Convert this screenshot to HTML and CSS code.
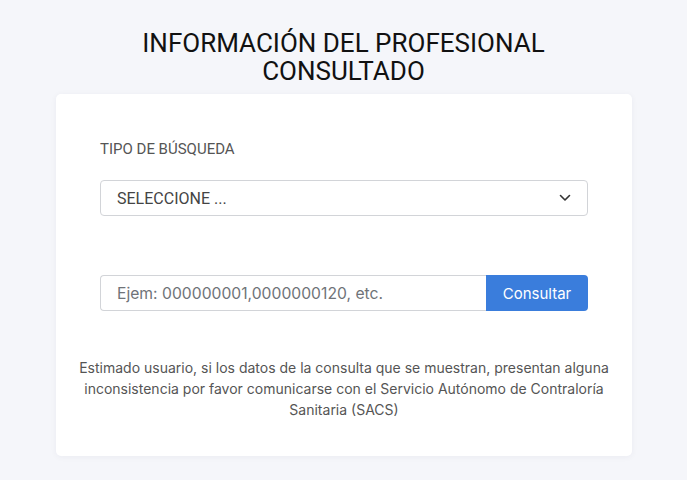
FILE: index.html
```html
<!DOCTYPE html>
<html lang="es">
<head>
<meta charset="utf-8">
<title>Información del profesional consultado</title>
<link rel="stylesheet" href="styles.css">
</head>
<body>
<main class="page">
  <h1 class="title">INFORMACIÓN DEL PROFESIONAL<br>CONSULTADO</h1>
  <section class="card">
    <label class="label">TIPO DE BÚSQUEDA</label>
    <div class="select">
      <span class="select-text">SELECCIONE ...</span>
      <svg class="chev" width="12" height="8" viewBox="0 0 12 8"><path d="M1.5 1.5 L6 6 L10.5 1.5" fill="none" stroke="#333" stroke-width="1.6" stroke-linecap="round" stroke-linejoin="round"/></svg>
    </div>
    <div class="group">
      <div class="input">Ejem: 000000001,0000000120, etc.</div>
      <button class="btn">Consultar</button>
    </div>
    <p class="note">Estimado usuario, si los datos de la consulta que se muestran, presentan alguna inconsistencia por favor comunicarse con el Servicio Autónomo de Contraloría Sanitaria (SACS)</p>
  </section>
</main>
</body>
</html>
```
FILE: styles.css
```css
* { box-sizing: border-box; }
html, body { margin: 0; padding: 0; }
body {
  background: #f5f6fa;
  font-family: Inter, "Noto Sans", sans-serif;
  color: #555;
  width: 687px;
  height: 480px;
  overflow: hidden;
}
.page {
  display: flex;
  flex-direction: column;
  align-items: center;
  padding-top: 29px;
}
.title {
  margin: 0;
  font-family: Roboto, "Liberation Sans", sans-serif;
  font-weight: 400;
  font-size: 26px;
  line-height: 28px;
  color: #111;
  text-align: center;
}
.card {
  margin-top: 9px;
  width: 576px;
  margin-left: 1px;
  background: #fff;
  border-radius: 5px;
  box-shadow: 0 1px 6px rgba(30, 40, 70, 0.05);
  padding: 43px 44px 36px;
  display: flex;
  flex-direction: column;
}
.label {
  font-family: Roboto, "Liberation Sans", sans-serif;
  font-size: 15px;
  line-height: 20px;
  color: #555;
  padding-top: 2px;
}
.select {
  margin-top: 21px;
  height: 36px;
  border: 1px solid #d2d4d8;
  border-radius: 4px;
  display: flex;
  align-items: center;
  justify-content: space-between;
  padding: 0 16px 0 16px;
}
.select-text {
  font-family: Roboto, "Liberation Sans", sans-serif;
  font-size: 16px;
  color: #444;
}
.chev { display: block; }
.group {
  margin-top: 59px;
  display: flex;
  height: 36px;
}
.input {
  flex: 1;
  border: 1px solid #d2d4d8;
  border-right: none;
  border-radius: 4px 0 0 4px;
  display: flex;
  align-items: center;
  padding-left: 16px;
  font-size: 15.7px;
  color: #6f7378;
}
.btn {
  width: 102px;
  border: none;
  border-radius: 0 4px 4px 0;
  background: #3a7ddc;
  color: #fff;
  font-family: Inter, "Noto Sans", sans-serif;
  font-size: 15px;
  padding: 0;
}
.note {
  margin: 46px -22px 0;
  font-size: 14px;
  line-height: 21px;
  text-align: center;
  color: #555;
}
```
